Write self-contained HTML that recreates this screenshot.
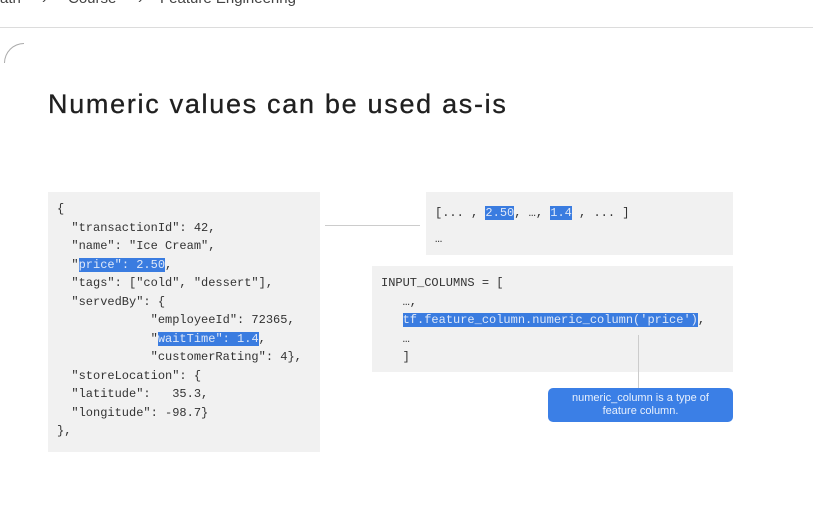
<!DOCTYPE html>
<html><head><style>
*{margin:0;padding:0;box-sizing:border-box}
body{width:813px;height:532px;background:#fff;position:relative;overflow:hidden;font-family:"Liberation Sans",sans-serif}
.c{position:absolute;top:-10px;font-size:15px;color:#444;white-space:pre}
.hr{position:absolute;top:27px;left:0;width:813px;height:1px;background:#dcdcdc}
.arc{position:absolute;left:4px;top:43px;width:20px;height:20px;border-left:1px solid #aaa;border-top:1px solid #aaa;border-radius:20px 0 0 0}
h1{position:absolute;left:48px;top:89px;font-size:27px;font-weight:normal;color:#202020;letter-spacing:1.7px;-webkit-text-stroke:0.3px #202020}
.box{position:absolute;background:#f1f1f1}
pre{font-family:"Liberation Mono",monospace;font-size:12px;color:#333;line-height:18.5px;position:absolute;white-space:pre}
.h{background:#3a7ce0;color:#dfe8f8}
.line{position:absolute;background:#ccc}
.call{position:absolute;left:548px;top:388px;width:185px;height:34px;background:#3b7fe6;border-radius:5px;color:#e8f0fd;font-size:11px;text-align:center;line-height:13px;padding-top:4px}
</style></head><body>
<div class="c" style="left:0">ath</div><div class="c" style="left:42px">›</div><div class="c" style="left:68px">Course</div><div class="c" style="left:138px">›</div><div class="c" style="left:160px">Feature Engineering</div>
<div class="hr"></div>
<div class="arc"></div>
<h1>Numeric values can be used as-is</h1>
<div class="box" style="left:48px;top:192px;width:272px;height:260px"></div>
<pre style="left:57px;top:200px">{
  "transactionId": 42,
  "name": "Ice Cream",
  "<span class="h">price": 2.50</span>,
  "tags": ["cold", "dessert"],
  "servedBy": {
             "employeeId": 72365,
             "<span class="h">waitTime": 1.4</span>,
             "customerRating": 4},
  "storeLocation": {
  "latitude":   35.3,
  "longitude": -98.7}
},</pre>
<div class="line" style="left:325px;top:225px;width:95px;height:1px"></div>
<div class="box" style="left:426px;top:192px;width:307px;height:63px"></div>
<pre style="left:435px;top:200px;line-height:26px">[... , <span class="h">2.50</span>, …, <span class="h">1.4</span> , ... ]
…</pre>
<div class="box" style="left:372px;top:266px;width:361px;height:106px"></div>
<pre style="left:381px;top:274px">INPUT_COLUMNS = [
   …,
   <span class="h">tf.feature_column.numeric_column('price')</span>,
   …
   ]</pre>
<div class="line" style="left:638px;top:335px;width:1px;height:53px"></div>
<div class="call">numeric_column is a type of<br>feature column.</div>
</body></html>
